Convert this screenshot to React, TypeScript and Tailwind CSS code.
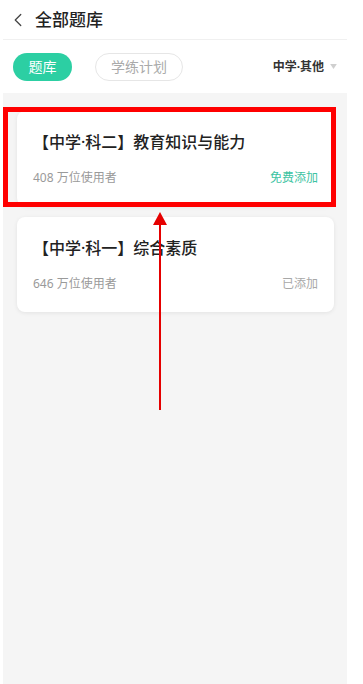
import { ChevronLeft } from 'lucide-react';

const font = "font-['Noto_Sans','Noto_Sans_CJK_SC',sans-serif]";

function BankCard({ title, users, action, added }: { title: string; users: string; action: string; added?: boolean }) {
  return (
    <div className="h-[95px] rounded-[8px] bg-white px-4 pt-[20px] shadow-[0_1px_4px_rgba(0,0,0,0.08)]">
      <div className="text-[16px] leading-[22px] font-medium text-[#222]">{title}</div>
      <div className="mt-[16px] flex items-center justify-between text-[12px] leading-[18px]">
        <span className="text-[#9a9a9a]">{users}</span>
        <span className={added ? 'text-[#a8a8a8]' : 'text-[#3cc3a2]'}>{action}</span>
      </div>
    </div>
  );
}

export default function App() {
  return (
    <div className={`relative h-[684px] w-full overflow-hidden bg-white ${font}`}>
      <div className="ml-[3px] flex h-full w-[344px] flex-col">
        <header className="flex h-[40px] items-center border-b border-[#f0f0f0] pl-[4px]">
          <ChevronLeft className="h-[22px] w-[22px] text-[#444]" strokeWidth={1.4} />
          <h1 className="ml-[6px] text-[17px] font-medium text-[#222]">全部题库</h1>
        </header>

        <div className="flex h-[53px] items-center pl-[10px] pr-[10px]">
          <span className="flex h-[28px] w-[59px] items-center justify-center rounded-full bg-[#2ccfa3] text-[14px] text-white">
            题库
          </span>
          <span className="ml-[23px] flex h-[28px] w-[88px] items-center justify-center rounded-full border border-[#e6e6e6] text-[14px] text-[#aaa]">
            学练计划
          </span>
          <span className="ml-auto flex items-center text-[12px] font-bold text-[#333]">
            中学·其他
            <svg viewBox="0 0 8 6" className="ml-[6px] h-[5px] w-[7px]">
              <path d="M0 0h8L4 6z" fill="#cfcfcf" />
            </svg>
          </span>
        </div>

        <main className="relative flex flex-1 flex-col gap-[11px] bg-[#f5f5f5] pl-[14px] pr-[13px] pt-[18px]">
          <BankCard title="【中学·科二】教育知识与能力" users="408 万位使用者" action="免费添加" />
          <BankCard title="【中学·科一】综合素质" users="646 万位使用者" action="已添加" added />
          <div className="pointer-events-none absolute left-0 top-[14px] h-[100px] w-[333px] border-[5px] border-[#ff0000]" />
        </main>
      </div>

      <svg className="pointer-events-none absolute left-[152px] top-[212px] h-[200px] w-[16px]" viewBox="0 0 16 200">
        <path d="M8 0L15 13H1z" fill="#e50000" />
        <rect x="7" y="12" width="2" height="186" fill="#e50000" />
      </svg>
    </div>
  );
}
